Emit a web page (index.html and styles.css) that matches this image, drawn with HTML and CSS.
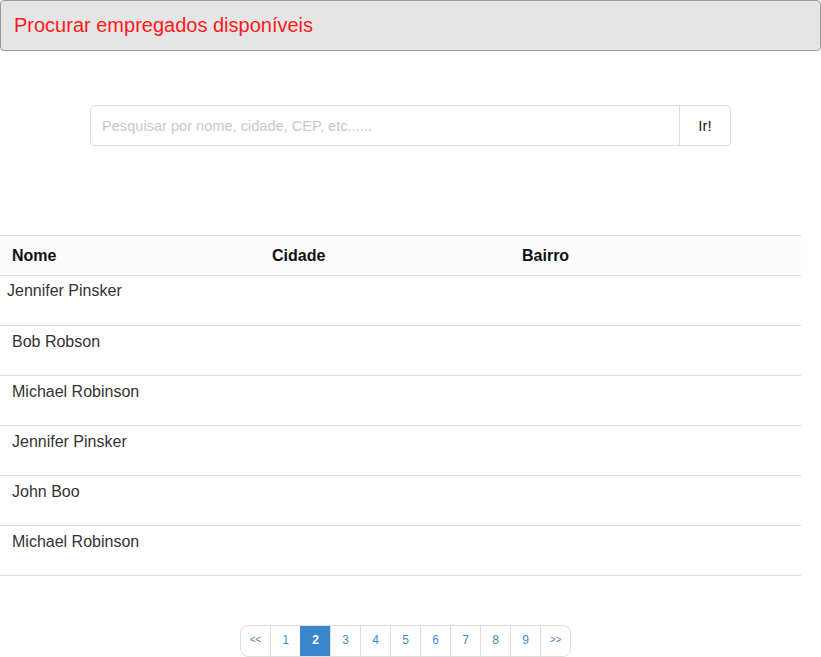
FILE: index.html
```html
<!DOCTYPE html>
<html lang="pt">
<head>
<meta charset="utf-8">
<title>Procurar empregados</title>
<link rel="stylesheet" href="styles.css">
</head>
<body>
<div class="header">Procurar empregados disponíveis</div>
<div class="search">
  <input class="search-input" type="text" placeholder="Pesquisar por nome, cidade, CEP, etc......">
  <button class="search-btn">Ir!</button>
</div>
<table class="grid">
  <thead>
    <tr><th class="c1">Nome</th><th class="c2">Cidade</th><th class="c3">Bairro</th></tr>
  </thead>
  <tbody>
    <tr><td class="first">Jennifer Pinsker</td><td></td><td></td></tr>
    <tr><td>Bob Robson</td><td></td><td></td></tr>
    <tr><td>Michael Robinson</td><td></td><td></td></tr>
    <tr><td>Jennifer Pinsker</td><td></td><td></td></tr>
    <tr><td>John Boo</td><td></td><td></td></tr>
    <tr><td>Michael Robinson</td><td></td><td></td></tr>
  </tbody>
</table>
<div class="pager-wrap">
  <ul class="pager">
    <li class="small">&lt;&lt;</li>
    <li>1</li>
    <li class="active">2</li>
    <li>3</li>
    <li>4</li>
    <li>5</li>
    <li>6</li>
    <li>7</li>
    <li>8</li>
    <li>9</li>
    <li class="small">&gt;&gt;</li>
  </ul>
</div>
</body>
</html>
```
FILE: styles.css
```css
* { box-sizing: border-box; }
html, body { margin: 0; padding: 0; background: #fff; }
body { font-family: "Liberation Sans", Arial, sans-serif; color: #333; width: 821px; }
.header {
  height: 51px;
  background: #e5e5e5;
  border: 1px solid #9a9a9a;
  border-radius: 4px;
  color: #ff1a1a;
  font-size: 20px;
  line-height: 20px;
  padding: 14px 13px;
}
.search {
  display: flex;
  margin: 54px 90px 0 90px;
  width: 641px;
  height: 41px;
  border: 1px solid #ddd;
  border-radius: 5px;
}
.search-input {
  flex: 1;
  border: none;
  outline: none;
  background: transparent;
  font-family: "Liberation Sans", Arial, sans-serif;
  font-size: 14.6px;
  padding: 0 11px;
  color: #333;
  border-radius: 5px 0 0 5px;
}
.search-input::placeholder { color: #c8c8c8; }
.search-btn {
  width: 51px;
  border: none;
  border-left: 1px solid #ddd;
  background: #fff;
  font-family: "Liberation Sans", Arial, sans-serif;
  font-size: 15px;
  color: #222;
  border-radius: 0 5px 5px 0;
  padding: 0;
}
.grid {
  margin-top: 89px;
  width: 801px;
  border-collapse: collapse;
  font-size: 16px;
}
.grid th {
  height: 40px;
  background: #fcfcfc;
  border-top: 1px solid #ddd;
  border-bottom: 1px solid #ddd;
  text-align: left;
  font-weight: bold;
  color: #111;
  padding: 0 12px;
}
.grid th.c1 { width: 260px; }
.grid th.c2 { width: 250px; }
.grid td {
  height: 50px;
  border-bottom: 1px solid #ddd;
  vertical-align: top;
  padding: 7px 12px 0 12px;
  line-height: 18px;
  color: #333;
}
.grid td.first { padding-left: 7px; padding-top: 6px; }
.pager-wrap {
  display: flex;
  justify-content: center;
  margin-top: 49px;
  padding-right: 10px;
}
.pager {
  display: flex;
  list-style: none;
  margin: 0;
  padding: 0;
  border: 1px solid #ddd;
  border-radius: 8px;
  overflow: hidden;
}
.pager li {
  width: 30px;
  height: 30px;
  line-height: 28px;
  text-align: center;
  font-size: 12px;
  color: #428bca;
  border-left: 1px solid #ddd;
}
.pager li:first-child { border-left: none; width: 29px; }
.pager li.small { font-size: 10px; }
.pager li.active { background: #3a87cd; color: #fff; border-left-color: #3a87cd; font-weight: bold; }
```
